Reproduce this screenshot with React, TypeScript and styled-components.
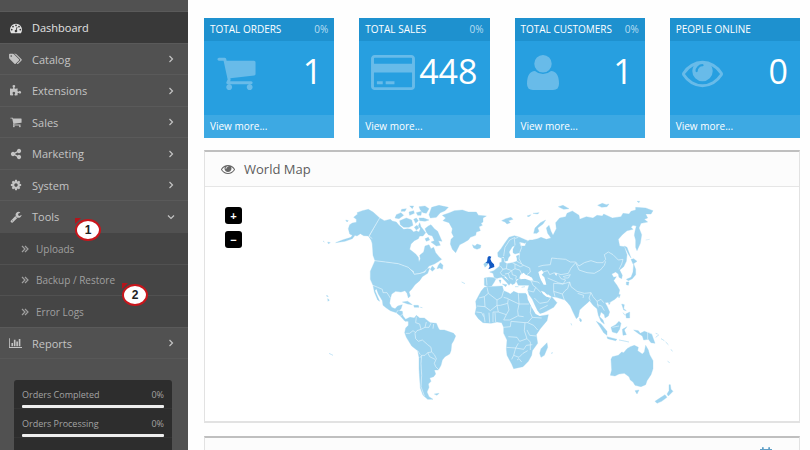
import React from "react";
import styled, { createGlobalStyle } from "styled-components";

const GlobalStyle = createGlobalStyle`
  * { box-sizing: border-box; }
  body {
    margin: 0;
    background: #fefefe;
    font-family: "Open Sans", "Noto Sans", sans-serif;
    font-size: 12px;
    color: #666;
  }
  ul { list-style: none; margin: 0; padding: 0; }
  a { color: inherit; text-decoration: none; }
  h2, h3 { margin: 0; font-weight: 400; }
`;

const icons = {
  dashboard: { w: 1792, d: "M384 1152q0-53-37.5-90.5t-90.5-37.5-90.5 37.5-37.5 90.5 37.5 90.5 90.5 37.5 90.5-37.5 37.5-90.5zm192-448q0-53-37.5-90.5t-90.5-37.5-90.5 37.5-37.5 90.5 37.5 90.5 90.5 37.5 90.5-37.5 37.5-90.5zm428 481l101-382q6-26-7.5-48.5t-38.5-29.5-48 6.5-30 39.5l-101 382q-60 5-107 43.5t-63 98.5q-20 77 20 146t117 89 146-20 89-117q16-60-6-117t-72-91zm660-33q0-53-37.5-90.5t-90.5-37.5-90.5 37.5-37.5 90.5 37.5 90.5 90.5 37.5 90.5-37.5 37.5-90.5zm-640-640q0-53-37.5-90.5t-90.5-37.5-90.5 37.5-37.5 90.5 37.5 90.5 90.5 37.5 90.5-37.5 37.5-90.5zm448 192q0-53-37.5-90.5t-90.5-37.5-90.5 37.5-37.5 90.5 37.5 90.5 90.5 37.5 90.5-37.5 37.5-90.5zm320 448q0 261-141 483-19 29-54 29h-1402q-35 0-54-29-141-221-141-483 0-182 71-348t191-286 286-191 348-71 348 71 286 191 191 286 71 348z" },
  tags: { w: 1920, d: "M448 448q0-53-37.5-90.5t-90.5-37.5-90.5 37.5-37.5 90.5 37.5 90.5 90.5 37.5 90.5-37.5 37.5-90.5zm1067 576q0 53-37 90l-491 492q-39 37-91 37-53 0-90-37l-715-716q-38-37-64.5-101t-26.5-117v-416q0-52 38-90t90-38h416q53 0 117 26.5t102 64.5l715 714q37 39 37 91zm384 0q0 53-37 90l-491 492q-39 37-91 37-36 0-59-14t-53-45l470-470q37-37 37-90 0-52-37-91l-715-714q-38-38-102-64.5t-117-26.5h224q53 0 117 26.5t102 64.5l715 714q37 39 37 91z" },
  puzzle: { w: 1792, d: "M1664 1098q0 81-44.5 135t-123.5 54q-41 0-77.5-17.5t-59-38-56.5-38-71-17.5q-110 0-110 124 0 39 16 115t15 115v5q-22 0-33 1-34 3-97.5 11.5t-115.5 13.5-98 5q-61 0-103-26.5t-42-83.5q0-37 17.5-71t38-56.5 38-59 17.5-77.5q0-79-54-123.5t-135-44.5q-84 0-143 45.5t-59 127.5q0 43 15 83t33.5 64.5 33.5 53 15 50.5q0 45-46 89-37 35-117 35-95 0-245-24-9-2-27.5-4t-27.5-4l-13-2q-1 0-3-1-2 0-2-1v-1024q2 1 17.5 3.5t34 5 21.5 3.5q150 24 245 24 80 0 117-35 46-44 46-89 0-22-15-50.5t-33.5-53-33.5-64.5-15-83q0-82 59-127.5t144-45.5q80 0 134 44.5t54 123.5q0 41-17.5 77.5t-38 59-38 56.5-17.5 71q0 57 42 83.5t103 26.5q64 0 180-15t163-17v2q-1 2-3.5 17.5t-5 34-3.5 21.5q-24 150-24 245 0 80 35 117 44 46 89 46 22 0 50.5-15t53-33.5 64.5-33.5 83-15q82 0 127.5 59t45.5 143z" },
  cart: { w: 1792, d: "M704 1536q0 52-38 90t-90 38-90-38-38-90 38-90 90-38 90 38 38 90zm896 0q0 52-38 90t-90 38-90-38-38-90 38-90 90-38 90 38 38 90zm128-1088v512q0 24-16.5 42.5t-40.5 21.5l-1044 122q13 60 13 70 0 16-24 64h920q26 0 45 19t19 45-19 45-45 19h-1024q-26 0-45-19t-19-45q0-11 8-31.5t16-36 21.5-40 15.5-29.5l-177-823h-204q-26 0-45-19t-19-45 19-45 45-19h256q16 0 28.5 6.5t19.5 15.5 13 24.5 8 26 5.5 29.5 4.5 26h1201q26 0 45 19t19 45z" },
  share: { w: 1792, d: "M1344 1024q133 0 226.5 93.5t93.5 226.5-93.5 226.5-226.5 93.5-226.5-93.5-93.5-226.5q0-12 2-34l-360-180q-92 86-218 86-133 0-226.5-93.5t-93.5-226.5 93.5-226.5 226.5-93.5q126 0 218 86l360-180q-2-22-2-34 0-133 93.5-226.5t226.5-93.5 226.5 93.5 93.5 226.5-93.5 226.5-226.5 93.5q-126 0-218-86l-360 180q2 22 2 34t-2 34l360 180q92-86 218-86z" },
  cog: { w: 1792, d: "M1152 896q0-106-75-181t-181-75-181 75-75 181 75 181 181 75 181-75 75-181zm512-109v222q0 12-8 23t-20 13l-185 28q-19 54-39 91 35 50 107 138 10 12 10 25t-9 23q-27 37-99 108t-94 71q-12 0-26-9l-138-108q-44 23-91 38-16 136-29 186-7 28-36 28h-222q-14 0-24.5-8.5t-11.5-21.5l-28-184q-49-16-90-37l-141 107q-10 9-25 9-14 0-25-11-126-114-165-168-7-10-7-23 0-12 8-23 15-21 51-66.5t54-70.5q-27-50-41-99l-183-27q-13-2-21-12.5t-8-23.5v-222q0-12 8-23t19-13l186-28q14-46 39-92-40-57-107-138-10-12-10-24 0-10 9-23 26-36 98.5-107.5t94.5-71.5q13 0 26 10l138 107q44-23 91-38 16-136 29-186 7-28 36-28h222q14 0 24.5 8.5t11.5 21.5l28 184q49 16 90 37l142-107q9-9 24-9 13 0 25 10 129 119 165 170 7 8 7 22 0 12-8 23-15 21-51 66.5t-54 70.5q26 50 41 98l183 28q13 2 21 12.5t8 23.5z" },
  wrench: { w: 1792, d: "M448 1472q0-26-19-45t-45-19-45 19-19 45 19 45 45 19 45-19 19-45zm644-420l-682 682q-37 37-90 37-52 0-91-37l-106-108q-38-36-38-90 0-53 38-91l681-681q39 98 114.5 173.5t173.5 114.5zm634-435q0 39-23 106-47 134-164.5 217.5t-258.5 83.5q-185 0-316.5-131.5t-131.5-316.5 131.5-316.5 316.5-131.5q58 0 121.5 16.5t107.5 46.5q16 11 16 28t-16 28l-293 169v224l193 107q5-3 79-48.5t135.5-81 70.5-35.5q15 0 23.5 10t8.5 25z" },
  chart: { w: 2048, d: "M640 896v512h-256v-512h256zm384-512v1024h-256v-1024h256zm1024 1152v128h-2048v-1536h128v1408h1920zm-640-896v768h-256v-768h256zm384-384v1152h-256v-1152h256z" },
  card: { w: 1920, d: "M1760 128q66 0 113 47t47 113v1216q0 66-47 113t-113 47h-1600q-66 0-113-47t-47-113v-1216q0-66 47-113t113-47h1600zm-1600 128q-13 0-22.5 9.5t-9.5 22.5v224h1664v-224q0-13-9.5-22.5t-22.5-9.5h-1600zm1600 1280q13 0 22.5-9.5t9.5-22.5v-608h-1664v608q0 13 9.5 22.5t22.5 9.5h1600zm-1504-128v-128h256v128h-256zm384 0v-128h384v128h-384z" },
  user: { w: 1408, d: "M704 128a384 384 0 1 1 0 768a384 384 0 1 1 0-768zM352 830Q500 965 704 965T1056 830Q1408 850 1408 1391Q1408 1664 1150 1664H258Q0 1664 0 1391Q0 850 352 830Z" },
  eye: { w: 1792, d: "M1664 960q-152-236-381-353 61 104 61 225 0 185-131.5 316.5t-316.5 131.5-316.5-131.5-131.5-316.5q0-121 61-225-229 117-381 353 133 205 333.5 326.5t434.5 121.5 434.5-121.5 333.5-326.5zm-720-384q0-20-14-34t-34-14q-125 0-214.5 89.5t-89.5 214.5q0 20 14 34t34 14 34-14 14-34q0-86 61-147t147-61q20 0 34-14t14-34zm848 384q0 34-20 69-140 230-376.5 368.5t-499.5 138.5-499.5-139-376.5-368q-20-35-20-69t20-69q140-229 376.5-368t499.5-139 499.5 139 376.5 368q20 35 20 69z" },
  calendar: { w: 1792, d: "M128 256h256V96q0-96 112-96t112 96v160h576V96q0-96 112-96t112 96v160h256v1408H128zM256 640v896h1280V640z" },
};

type IconName = keyof typeof icons;

const Icon = ({ name, size }: { name: IconName; size: number }) => (
  <svg
    height={size}
    width={Math.round((size * icons[name].w) / 1792)}
    viewBox={`0 0 ${icons[name].w} 1792`}
    fill="currentColor"
    aria-hidden="true"
  >
    <path d={icons[name].d} />
  </svg>
);

const Angle = ({ d, size = 8 }: { d: string; size?: number }) => (
  <svg width={size} height={size} viewBox="0 0 8 8" fill="none" stroke="currentColor" strokeWidth="1.2" aria-hidden="true">
    <path d={d} />
  </svg>
);

const Shell = styled.div`
  display: flex;
  height: 100vh;
  overflow: hidden;
`;

const Sidebar = styled.aside`
  flex: 0 0 188px;
  padding-top: 11px;
  background: #515151;
  color: #c4c4c4;
`;

const MenuItem = styled.li<{ $active?: boolean }>`
  position: relative;
  border-top: 1px solid #5a5a5a;
  background: ${(p) => (p.$active ? "#393939" : "transparent")};
  color: ${(p) => (p.$active ? "#e2e2e2" : "inherit")};
  &:last-child { border-bottom: 1px solid #585858; }
`;

const MenuLink = styled.a`
  display: flex;
  align-items: center;
  height: 31px;
  padding: 0 13px 0 9px;
  font-size: 11px;
  ${MenuItem}:nth-child(even) > & { height: 30px; }
`;

const IconSlot = styled.span`
  display: flex;
  justify-content: center;
  width: 13px;
  margin-right: 10px;
`;

const MenuLabel = styled.span`
  flex: 1;
`;

const SubMenu = styled.ul`
  background: #454545;
  color: #a0a0a0;
`;

const SubItem = styled.li`
  position: relative;
  border-top: 1px solid #515151;
`;

const SubLink = styled.a`
  display: flex;
  align-items: center;
  gap: 7px;
  height: 31px;
  padding-left: 21px;
  font-size: 10px;
  ${SubItem}:nth-child(even) > & { height: 30px; }
`;

const Callout = styled.span<{ $left: number; $top: number }>`
  position: absolute;
  z-index: 1;
  left: ${(p) => p.$left}px;
  top: ${(p) => p.$top}px;
  width: 26px;
  height: 22px;
  border: 2px solid #c9151b;
  border-radius: 50%;
  background: #fff;
  color: #222;
  font: bold 12px/18px "Liberation Sans", sans-serif;
  text-align: center;
  &::before {
    content: "";
    position: absolute;
    left: -2px;
    top: -3px;
    border-top: 6px solid #b3151b;
    border-right: 6px solid transparent;
  }
`;

const Stats = styled.ul`
  margin: 21px 16px 0 14px;
  padding-bottom: 40px;
  border-radius: 3px;
  background: #2d2d2d;
  color: #a3a3a3;
`;

const Stat = styled.li`
  padding: 8px 8px 0;
  border-bottom: 1px solid #343434;
  font-size: 9px;
  line-height: 14px;
`;

const StatHead = styled.div`
  display: flex;
  justify-content: space-between;
`;

const Bar = styled.div`
  height: 3px;
  margin-top: 3px;
  border-radius: 1px;
  background: #efefef;
`;

const Main = styled.main`
  flex: 1;
  min-width: 0;
  padding: 18px 10px 0 16px;
`;

const Tiles = styled.div`
  display: grid;
  grid-template-columns: repeat(4, 1fr);
  gap: 25px;
`;

const Tile = styled.section`
  background: #279fe0;
  color: #fff;
  font-size: 10px;
`;

const TileHead = styled.header`
  display: flex;
  justify-content: space-between;
  padding: 0 6px;
  background: #1e91cf;
  line-height: 23px;
  h3 { font-size: inherit; white-space: nowrap; }
  span { color: #b9def2; }
`;

const TileBody = styled.div`
  display: flex;
  justify-content: space-between;
  align-items: flex-start;
  height: 74px;
  padding: 7px 12px 0;
  svg { margin-top: 4px; color: #68bbe9; flex: none; }
`;

const TileValue = styled.span`
  font-size: 34px;
  line-height: 46px;
`;

const TileFoot = styled.footer`
  padding-left: 6px;
  background: #3da9e3;
  line-height: 23px;
`;

const Panel = styled.section`
  margin-top: 12px;
  border: 1px solid #e2e2e2;
  border-top: 2px solid #bfbfbf;
  border-bottom-width: 2px;
  background: #fff;
  & + & { margin-top: 13px; }
`;

const PanelHead = styled.header`
  display: flex;
  align-items: center;
  height: 35px;
  padding: 0 26px 0 16px;
  gap: 9px;
  border-bottom: 1px solid #e6e6e6;
  background: #fcfcfc;
  h2 { font-size: 13px; color: #5c5c5c; }
`;

const RangeLink = styled.a`
  display: flex;
  align-self: flex-start;
  margin-left: auto;
  padding-top: 9px;
  color: #5f9fc6;
`;

const MapArea = styled.div`
  position: relative;
  display: flex;
  justify-content: center;
  padding: 3px 0 1px;
  svg { display: block; max-width: 100%; }
`;

const ZoomControls = styled.div`
  position: absolute;
  left: 20px;
  top: 20px;
  display: grid;
  gap: 7px;
`;

const ZoomButton = styled.button`
  width: 17px;
  height: 17px;
  padding: 0;
  border: 0;
  border-radius: 3px;
  background: #000;
  color: #fff;
  font: bold 11px/16px "Liberation Sans", sans-serif;
`;

const WorldMap = () => (
  <svg width="366" height="230" viewBox="0 0 1098 690" role="img" aria-label="World map">
    <g fill="#9dd3ef" stroke="#9dd3ef" strokeWidth="1" strokeLinejoin="round">
      {/* North America and Greenland */}
      <path d="M88 116 92 104 100 99 112 97 112 88 104 82 116 72 114 68 130 62 148 58 162 66 182 84 150 138 160 146 165 160 168 176 162 172 158 152 148 138 134 137 124 131 114 138 108 136 100 146 78 154 50 158 70 150 96 142 100 136 92 132ZM182 84 196 92 214 88 220 93 232 96 240 106 254 118 266 116 276 118 284 126 292 122 300 126 304 116 298 108 302 98 306 110 312 118 320 128 312 138 302 138 298 146 286 152 276 162 272 178 290 192 298 202 300 216 304 206 302 196 314 186 318 168 330 164 336 176 344 172 350 188 360 200 368 208 356 216 346 222 330 228 322 240 312 246 302 250 286 252 284 244 266 232 240 222 200 216 168 212 162 196 160 160 152 138Z" />
      <path d="M168 212 200 216 238 221 268 232 282 246 286 253 300 251 318 246 322 238 332 234 326 250 310 260 302 272 288 284 278 298 270 306 274 318 268 324 264 310 258 302 246 306 230 304 218 312 214 326 212 340 218 352 228 356 236 348 250 344 246 356 240 362 250 364 252 378 260 388 272 382 282 388 290 382 286 390 272 394 258 394 244 378 232 368 214 362 202 354 192 346 190 332 178 312 172 296 168 302 182 334 176 330 166 306 162 286 154 268 154 244Z" />
      <path d="M318 116 328 108 336 104 346 116 356 124 362 138 369 154 358 152 364 166 352 168 336 156 346 152 340 138 328 134 322 126ZM242 92 262 84 278 90 282 106 270 112 254 112 244 104ZM232 74 246 68 254 76 240 86 228 84ZM284 88 292 84 298 92 290 100ZM300 84 314 84 330 90 318 94 302 92ZM330 74 338 52 360 46 388 52 378 62 364 68 352 82 334 84ZM248 58 262 56 258 64 246 64ZM270 66 284 62 286 70 272 76ZM292 68 308 64 306 76 296 76ZM272 48 284 48 280 56ZM300 50 318 48 330 56 322 70 312 68 304 60ZM286 112 294 106 300 114 292 120ZM318 146 328 142 332 150 322 154ZM358 226 364 218 372 226 370 238 362 234 354 236ZM340 228 348 236 340 244 334 238ZM80 90 88 92 84 96ZM26 156 34 158 28 161ZM12 153 16 156ZM24 316 28 320 22 318ZM26 326 31 330 27 334ZM250 336 266 334 280 344 266 342ZM284 346 298 346 300 352 286 352ZM304 352 310 353ZM428 276 438 281Z" />
      <path d="M370 76 392 68 406 62 430 60 448 66 472 66 478 76 502 78 492 84 492 96 486 100 490 106 480 110 484 122 472 126 470 136 454 142 448 150 434 158 422 164 416 176 410 188 400 178 394 162 396 148 404 140 398 128 400 116 390 98 372 92 380 84ZM460 164 468 168 474 162 486 166 484 174 474 178 464 174Z" />

      {/* South America */}
      <g transform="translate(0 330)">
        <path d="M268 62 274 52 286 54 292 46 302 54 316 54 326 62 334 68 352 70 358 84 362 90 376 90 404 100 410 108 404 122 398 132 396 152 392 162 378 170 370 180 366 196 358 210 346 210 350 222 344 230 332 234 336 244 328 252 330 262 324 276 330 290 342 298 326 298 312 286 304 264 302 236 300 206 300 172 296 152 278 138 262 112 257 98 260 84 268 76ZM346 282 360 280 354 286ZM30 160 42 166Z" />
      </g>

      {/* Eurasia */}
      <g transform="translate(450 0)">
        <path d="M46 264 60 262 76 263 72 250 62 246 74 242 82 236 92 228 92 218 98 216 98 204 104 204 106 216 114 221 130 218 144 214 144 206 142 198 152 194 152 188 138 192 132 188 132 178 138 166 130 170 120 186 124 196 118 204 116 212 108 214 104 200 96 204 87 200 86 188 96 176 108 158 120 142 136 137 150 141 176 152 168 160 152 156 156 168 168 168 172 156 182 150 190 150 206 146 216 142 232 148 246 144 236 130 232 114 240 106 246 124 252 136 262 116 260 98 272 84 290 80 294 70 310 63 330 76 332 88 352 80 372 84 384 76 400 78 404 72 430 84 456 80 462 70 480 72 486 64 500 60 500 52 530 54 552 62 546 72 530 72 536 84 526 88 536 96 516 100 510 114 518 134 514 160 504 182 500 172 500 150 496 136 498 124 502 108 492 106 486 112 492 118 474 122 460 134 448 148 452 168 466 170 474 194 472 214 464 230 452 240 460 256 458 266 450 262 448 252 440 246 428 252 434 262 442 260 434 272 444 286 452 300 448 318 438 328 424 336 408 338 414 348 422 366 418 378 408 384 406 374 396 366 392 380 402 390 406 402 396 394 388 376 384 356 372 346 362 332 356 338 342 350 332 360 328 380 322 386 312 366 304 348 296 338 288 330 262 322 248 320 236 312 234 320 244 324 248 320 264 338 254 352 232 364 214 372 206 362 198 346 190 328 180 314 176 300 180 286 166 286 148 286 142 274 150 266 168 266 184 272 194 272 188 262 176 258 166 260 164 250 154 254 150 266 142 268 138 280 130 284 122 276 114 264 108 258 106 262 126 278 120 286 112 276 98 262 88 264 80 268 76 276 68 288 56 290 46 286Z" />
        <path d="M44 222 54 214 56 224 48 232ZM194 130 198 114 214 98 230 90 222 102 206 114 210 124 204 130ZM98 92 110 86 126 82 132 88 118 92 124 98 114 102 108 96ZM174 78 186 74 180 80ZM192 70 210 68 206 72ZM268 50 282 46 300 56 284 58ZM386 46 400 40 412 44 420 42 414 50 398 52ZM504 34 512 34 510 38ZM466 168 474 172 486 204 478 192 470 176ZM486 208 494 206 504 214 492 222ZM494 222 500 238 500 254 490 266 478 272 472 268 486 262 492 246ZM472 276 480 276 478 286 472 284ZM138 290 148 290ZM100 282 114 284 110 290ZM90 270 96 270 94 280ZM158 292 168 290ZM530 150 542 148" />
      </g>

      {/* Africa and Oceania */}
      <g transform="translate(450 300)">
        <path d="M36 4 46 -8 60 -10 100 -12 104 2 118 8 124 12 134 4 148 10 170 10 180 24 194 52 206 70 214 78 238 74 234 92 214 116 202 134 206 160 190 182 188 196 178 214 162 230 134 236 128 222 114 196 112 176 114 150 104 130 104 112 98 98 84 96 66 100 42 98 28 86 18 72 22 52 20 34Z" />
        <path d="M234 158 236 172 226 196 216 202 212 190 216 176ZM332 84 338 90 336 96 332 92ZM382 94 396 102 414 124 414 136 404 128 394 112ZM414 140 444 148 440 152 416 146ZM450 150 462 152 480 156ZM426 112 440 104 450 94 456 100 452 118 444 130 430 126ZM460 118 474 110 466 120 472 134 462 136ZM458 42 466 44 464 56 472 62 464 60ZM470 72 482 66 482 84 472 84ZM462 68 468 76ZM446 12 454 14 450 24ZM494 120 508 122 514 130 526 124 548 132 558 160 546 158 538 148 524 150 520 138 510 132ZM560 142 570 134ZM560 130 566 132ZM576 146 586 152ZM590 156 598 164ZM596 214 602 218ZM606 178 610 184ZM246 190 252 188ZM306 100 308 106ZM418 36 424 38 420 44Z" />
        <path d="M426 208 430 200 448 196 458 186 464 188 474 176 484 170 496 166 508 172 506 182 520 192 526 186 530 166 538 180 542 194 552 212 552 236 546 254 534 272 530 284 516 290 498 286 492 276 484 270 480 260 466 250 450 252 438 258 424 256 428 240ZM498 302 510 300 504 312ZM600 284 604 284 606 298 612 304 598 318 594 312 600 302ZM588 314 594 322 578 334 564 340 558 334 576 322Z" />
      </g>
    </g>

    <g fill="#fff" stroke="none">
      {/* Black Sea, Caspian Sea and gulfs */}
      <path d="M604 268 606 254 614 248 620 254 630 258 640 266 634 270 618 266ZM658 246 668 240 674 248 668 254 676 262 680 276 682 284 674 284 666 270 662 260ZM706 250 714 250 712 258ZM666 302 676 306 686 316 692 322 682 320 672 312ZM624 308 632 324 646 352 660 372 680 368 662 378 650 372 638 352 626 328Z" />
    </g>

    <g fill="none" stroke="#e4f4fc" strokeWidth="2" strokeLinejoin="round">
      <path d="M182 84 150 138 160 146M168 212 200 216 238 221 268 232 282 246 286 253 300 251 318 246 322 238M162 286 176 292 190 298 192 308 204 308 214 324M232 368 238 360M244 378 252 372" />
      <path transform="translate(0 330)" d="M292 50 290 68 302 72 306 88 294 92 288 100 290 116 298 124 310 120 326 134 336 142 338 156 326 158 318 166 308 166 302 174M260 100 272 100 282 92 290 98M306 88 318 82 322 66M318 82 330 82 336 70M342 86 344 72M338 156 346 164 352 176 346 190 350 200 360 210M326 158 332 170 348 178M308 166 306 190 308 226 306 260 316 288M296 152 304 164" />
      <path transform="translate(450 0)" d="M104 198 108 172 122 150 138 142M138 166 136 146 148 142M152 188 158 172 152 158M152 190 150 206 158 222 164 226 182 234 184 246 174 254M144 214 158 222M130 218 138 222 138 236 128 242 112 236 114 221M94 228 102 238 94 248 100 256 108 258M112 236 100 238M128 242 118 250 108 252M138 236 152 240 158 252M128 242 130 254 142 258 140 268M118 250 122 264 132 268M74 263 88 268M52 264 54 286M138 222 154 230 164 226M208 230 222 226 244 224 248 204 266 206 290 208 304 216 320 216 330 228M330 228 346 218 366 212 384 218 402 218 410 208 406 194 418 186 432 194 448 210 462 208 458 222 450 238M320 218 330 240 354 248 376 250 394 240 406 226 410 214M320 218 306 234 298 250 276 254 256 248 242 254 236 242 222 246M236 264 254 272 268 278 282 282 290 270 276 266 270 256M282 260 304 254 298 264 284 264M282 282 302 276 306 290 324 304 346 310 366 308 372 320M302 276 296 296 288 302 280 312 286 330M254 280 254 304 258 320M254 304 280 312M254 280 282 282M366 308 360 324 364 332M372 320 384 334 388 352M384 334 396 328 404 338M384 344 398 348 406 362M186 272 192 286 200 292 194 306 178 302M184 272 206 276 212 280M200 292 216 308M196 324 212 340 236 336 246 322M212 358 236 346M326 310 344 316 342 324" />
      <path transform="translate(450 300)" d="M54 -8 58 10 46 20 30 24M58 10 84 30 98 22 104 2M46 20 48 50 24 48M48 50 64 62 84 46 84 30M104 22 118 26 116 40 94 46 84 46M148 10 150 42 120 28M150 42 180 42M150 42 146 62 148 78 164 80M84 46 88 66 112 74 120 60 116 40M88 66 72 66 72 96M60 68 62 98M44 70 48 96M22 66 38 68 44 80M78 68 80 96M112 74 104 90 122 90 146 78M104 112 124 110 126 94 168 98 166 122 174 146 152 154 144 142 118 140M186 48 184 68 190 82 176 98 168 98M190 82 218 84M176 98 194 106 206 120M174 120 182 136 202 138M112 172 140 174 148 160M140 174 134 196 128 208M140 174 164 178 172 166 190 164M134 196 150 202 162 190 176 182M144 210 150 206 158 216M174 146 184 156 184 180M548 132 536 126 536 148M430 112 450 108" />
    </g>
    <path transform="translate(450 0)" fill="#1259c3" d="M56 202 60 198 67 200 64 207 68 216 75 223 76 231 58 238 62 230 60 222 54 216ZM50 216 56 216 56 222Z" />
  </svg>
);

const rightAngle = "M2.5 1 5.5 4 2.5 7";
const downAngle = "M1 2.5 4 5.5 7 2.5";
const doubleAngle = "M1 1 4 4 1 7M4 1 7 4 4 7";

const menu: { label: string; icon: IconName; children?: string[] }[] = [
  { label: "Dashboard", icon: "dashboard" },
  { label: "Catalog", icon: "tags" },
  { label: "Extensions", icon: "puzzle" },
  { label: "Sales", icon: "cart" },
  { label: "Marketing", icon: "share" },
  { label: "System", icon: "cog" },
  { label: "Tools", icon: "wrench", children: ["Uploads", "Backup / Restore", "Error Logs"] },
  { label: "Reports", icon: "chart" },
];

const tiles: { title: string; pct?: string; value: string; icon: IconName }[] = [
  { title: "TOTAL ORDERS", pct: "0%", value: "1", icon: "cart" },
  { title: "TOTAL SALES", pct: "0%", value: "448", icon: "card" },
  { title: "TOTAL CUSTOMERS", pct: "0%", value: "1", icon: "user" },
  { title: "PEOPLE ONLINE", value: "0", icon: "eye" },
];

export default function App() {
  return (
    <>
      <GlobalStyle />
      <Shell>
        <Sidebar>
          <nav>
            <ul>
              {menu.map((m, i) => (
                <MenuItem key={m.label} $active={i === 0}>
                  <MenuLink href="#">
                    <IconSlot><Icon name={m.icon} size={12} /></IconSlot>
                    <MenuLabel>{m.label}</MenuLabel>
                    {i > 0 && <Angle d={m.children ? downAngle : rightAngle} />}
                  </MenuLink>
                  {m.children && <Callout $left={75} $top={18}>1</Callout>}
                  {m.children && (
                    <SubMenu>
                      {m.children.map((c) => (
                        <SubItem key={c}>
                          <SubLink href="#"><Angle d={doubleAngle} />{c}</SubLink>
                          {c === "Backup / Restore" && <Callout $left={122} $top={19}>2</Callout>}
                        </SubItem>
                      ))}
                    </SubMenu>
                  )}
                </MenuItem>
              ))}
            </ul>
          </nav>
          <Stats>
            {["Orders Completed", "Orders Processing"].map((s) => (
              <Stat key={s}>
                <StatHead><span>{s}</span><span>0%</span></StatHead>
                <Bar />
              </Stat>
            ))}
          </Stats>
        </Sidebar>
        <Main>
          <Tiles>
            {tiles.map((t) => (
              <Tile key={t.title}>
                <TileHead><h3>{t.title}</h3>{t.pct && <span>{t.pct}</span>}</TileHead>
                <TileBody>
                  <Icon name={t.icon} size={41} />
                  <TileValue>{t.value}</TileValue>
                </TileBody>
                <TileFoot><a href="#">View more...</a></TileFoot>
              </Tile>
            ))}
          </Tiles>
          <Panel>
            <PanelHead><Icon name="eye" size={14} /><h2>World Map</h2></PanelHead>
            <MapArea>
              <WorldMap />
              <ZoomControls>
                <ZoomButton type="button" aria-label="Zoom in">+</ZoomButton>
                <ZoomButton type="button" aria-label="Zoom out">−</ZoomButton>
              </ZoomControls>
            </MapArea>
          </Panel>
          <Panel>
            <PanelHead>
              <RangeLink href="#" aria-label="Choose range"><Icon name="calendar" size={14} /></RangeLink>
            </PanelHead>
          </Panel>
        </Main>
      </Shell>
    </>
  );
}
